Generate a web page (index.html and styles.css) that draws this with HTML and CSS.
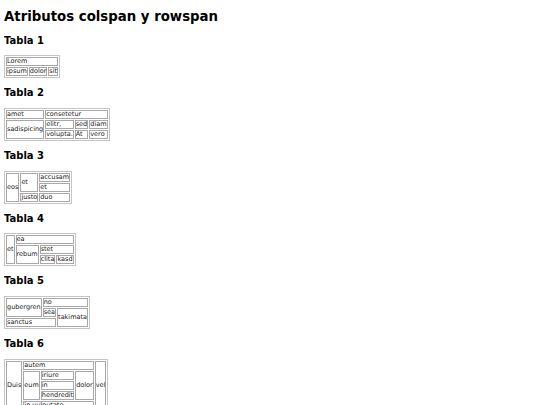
FILE: index.html
```html
<!DOCTYPE html>
<html lang="es">
<head>
<meta charset="utf-8">
<title>Atributos colspan y rowspan</title>
<link rel="stylesheet" href="styles.css">
</head>
<body>
<h1 class="title">Atributos colspan y rowspan</h1>

<h2 class="sub">Tabla 1</h2>
<table class="grid">
  <tr><td colspan="3">Lorem</td></tr>
  <tr><td>ipsum</td><td>dolor</td><td>sit</td></tr>
</table>

<h2 class="sub">Tabla 2</h2>
<table class="grid">
  <tr><td>amet</td><td colspan="3">consetetur</td></tr>
  <tr><td rowspan="2">sadispicing</td><td>elitr,</td><td>sed</td><td>diam</td></tr>
  <tr><td>volupta.</td><td>At</td><td>vero</td></tr>
</table>

<h2 class="sub">Tabla 3</h2>
<table class="grid">
  <tr><td rowspan="3">eos</td><td rowspan="2">et</td><td>accusam</td></tr>
  <tr><td>et</td></tr>
  <tr><td>justo</td><td>duo</td></tr>
</table>

<h2 class="sub">Tabla 4</h2>
<table class="grid">
  <tr><td rowspan="3">et</td><td colspan="3">ea</td></tr>
  <tr><td rowspan="2">rebum</td><td colspan="2">stet</td></tr>
  <tr><td>clita</td><td>kasd</td></tr>
</table>

<h2 class="sub">Tabla 5</h2>
<table class="grid">
  <tr><td rowspan="2">gubergren</td><td colspan="2">no</td></tr>
  <tr><td>sea</td><td rowspan="2">takimata</td></tr>
  <tr><td colspan="2">sanctus</td></tr>
</table>

<h2 class="sub">Tabla 6</h2>
<table class="grid">
  <tr><td rowspan="5">Duis</td><td colspan="3">autem</td><td rowspan="5">vel</td></tr>
  <tr><td rowspan="3">eum</td><td>iriure</td><td rowspan="3">dolor</td></tr>
  <tr><td>in</td></tr>
  <tr><td>hendredit</td></tr>
  <tr><td colspan="3">in vulputate</td></tr>
</table>
</body>
</html>
```

FILE: styles.css
```css
html, body {
  background: #ffffff;
}
body {
  margin: 0 4px;
  font-family: "DejaVu Sans", Verdana, sans-serif;
  color: #000000;
}
.title {
  font-size: 13.3px;
  font-weight: bold;
  margin: 9.4px 0 10px 0;
  line-height: 1.164;
}
.sub {
  font-size: 10px;
  font-weight: bold;
  margin: 9px 0;
  line-height: 1.164;
}
.grid {
  border: 1px solid #c4c4c4;
  border-spacing: 1px;
  font-size: 6.5px;
  line-height: 7px;
}
.grid td {
  border: 1px solid #a8a8a8;
  padding: 0;
  color: #222222;
}
```
